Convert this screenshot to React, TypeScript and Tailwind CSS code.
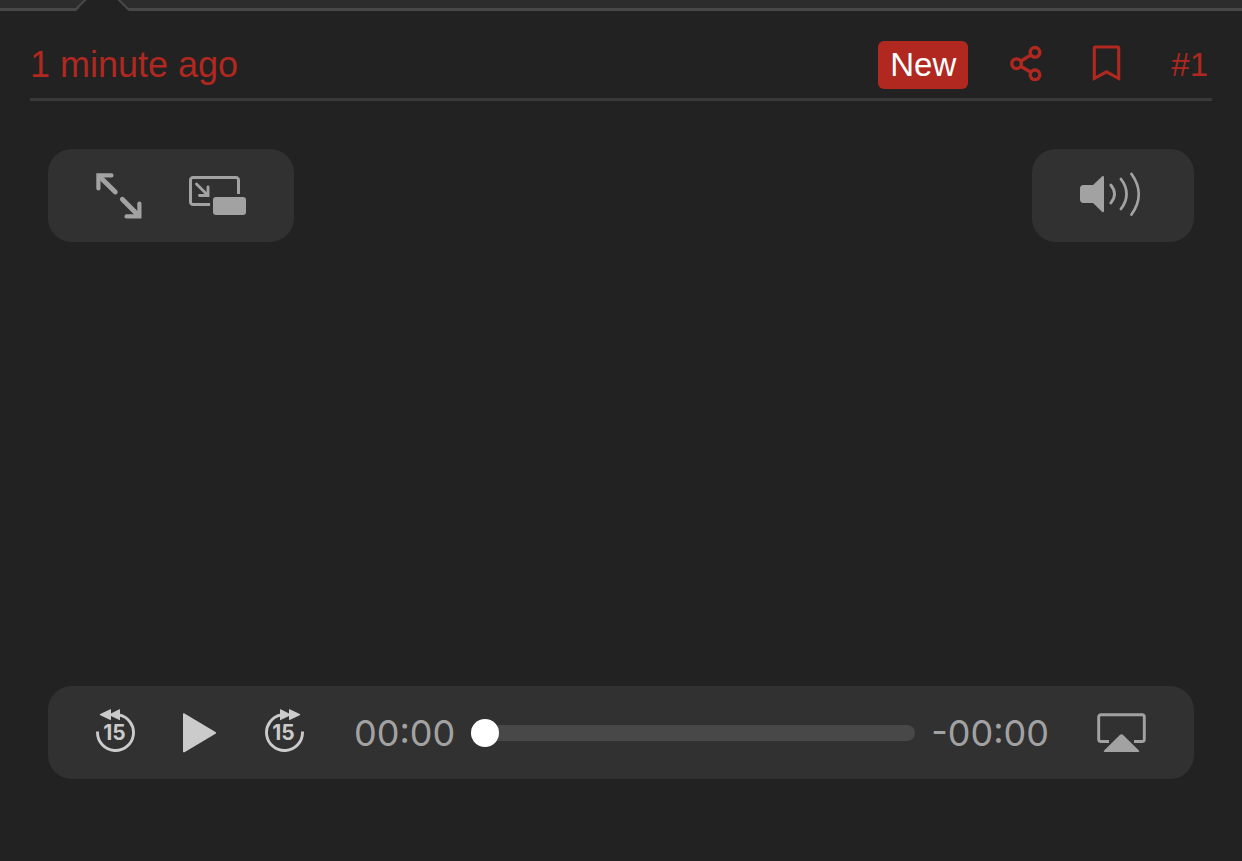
import { useState } from "react";

function ShareIcon() {
  return (
    <svg width="32" height="40" viewBox="0 0 32 40" fill="none" stroke="currentColor" strokeWidth="3.4" aria-hidden="true">
      <circle cx="6.6" cy="18.7" r="4.8" />
      <circle cx="25" cy="7.3" r="4.8" />
      <circle cx="25" cy="29.8" r="4.8" />
      <path d="M10.7 16.200 20.900 9.900M10.700 21.200 20.900 27.200" />
    </svg>
  );
}

function BookmarkIcon() {
  return (
    <svg width="29" height="40" viewBox="0 0 29 40" fill="none" stroke="currentColor" strokeWidth="3.1" aria-hidden="true">
      <path d="M3.200 2h22.600a.9.9 0 0 1 .9.9v30.600L14.500 26.800 2.300 33.500V2.900a.9.9 0 0 1 .9-.9Z" />
    </svg>
  );
}

function FullscreenIcon() {
  return (
    <svg width="46" height="46" viewBox="0 0 46 46" fill="none" stroke="currentColor" strokeLinecap="round" aria-hidden="true">
      <path d="M19.300 19 4 4M26.300 26.300 42 42" strokeWidth="4.800" />
      <path d="M15.500 2.400H2.400V15.500M30.500 43.400H43.400V30.500" strokeWidth="4.200" />
    </svg>
  );
}

function PipIcon() {
  return (
    <svg width="57" height="40" viewBox="0 0 57 40" fill="none" stroke="currentColor" aria-hidden="true">
      <path d="M21 28.500H4A2.500 2.500 0 0 1 1.500 26V4A2.500 2.500 0 0 1 4 1.500h43A2.500 2.500 0 0 1 49.500 4v14" strokeWidth="3" />
      <path d="M7.500 8 18.500 19M19 11v8.500H10.500" strokeWidth="2.900" strokeLinecap="round" />
      <rect x="24" y="21" width="33" height="18" rx="3" fill="currentColor" stroke="none" />
    </svg>
  );
}

function VolumeIcon() {
  return (
    <svg width="66" height="49" viewBox="0 0 66 49" fill="none" stroke="currentColor" strokeLinecap="round" aria-hidden="true">
      <path
        d="M3.500 14H13L22 5.400c.8-.8 2-.4 2 .8v33.800c0 1.200-1.200 1.600-2 .8L13 32H3.500C1.300 32 0 30.700 0 28.500v-11C0 15.300 1.300 14 3.500 14Z"
        fill="currentColor"
        stroke="none"
      />
      <path d="M30.800 14c5 6 5 12 0 18M40.900 8c7.500 9.500 7.500 20.500 0 30M51.500 3c9.500 13 9.500 27.500 0 40.500" strokeWidth="2.800" />
    </svg>
  );
}

function SkipIcon({ forward = false }: { forward?: boolean }) {
  return (
    <svg width="39" height="47" viewBox="0 0 39 47" aria-hidden="true">
      <g transform={forward ? "matrix(-1 0 0 1 39 0)" : undefined}>
        <path d="M1.500 22.500v1A18 18 0 1 0 23 5.900" fill="none" stroke="currentColor" strokeWidth="2.900" />
        <path d="M4.300 5 14.300.3c.5-.2.7 0 .7.500v3.700L23.300.3c.5-.2.7 0 .7.500v9.800c0 .5-.3.700-.7.500L15 6.900v3.700c0 .5-.3.700-.7.500L4.300 6.300C3.700 6 3.700 5.300 4.300 5Z" fill="currentColor" />
      </g>
      <text x="18.500" y="31" textAnchor="middle" fill="currentColor" className="font-['Inter',sans-serif] text-[21px] font-bold">
        15
      </text>
    </svg>
  );
}

function PlayIcon() {
  return (
    <svg width="36" height="40" viewBox="0 0 36 40" fill="currentColor" aria-hidden="true">
      <path d="M1 1.200C1 .4 1.800 0 2.500.4l31 18.500c.8.500.8 1.300 0 1.800l-31 18.500c-.7.400-1.500 0-1.500-.8Z" />
    </svg>
  );
}

function AirPlayIcon() {
  return (
    <svg width="49" height="40" viewBox="0 0 49 40" fill="none" aria-hidden="true">
      <path
        d="M12 28.500H4A2.300 2.300 0 0 1 1.700 26.200V4A2.300 2.300 0 0 1 4 1.700h41A2.300 2.300 0 0 1 47.300 4v22.200a2.300 2.300 0 0 1-2.300 2.300h-8"
        stroke="currentColor"
        strokeWidth="2.900"
      />
      <path d="M23.100 21.800c.8-.8 2-.8 2.800 0l16 15.700c.7.700.4 1.500-.5 1.500H7.600c-.9 0-1.200-.8-.5-1.500Z" fill="currentColor" />
    </svg>
  );
}

function PostHeader() {
  return (
    <header className="flex items-center justify-between border-b-[3px] border-[#393939] pr-1 pb-[9px] text-[#b0281f]">
      <a href="#post" className="text-[36px] leading-[48px]">
        1 minute ago
      </a>
      <div className="flex items-center text-[33px] leading-[48px]">
        <span className="rounded-md bg-[#b0281f] px-3 text-white">New</span>
        <button type="button" aria-label="Share" className="ml-[42px]">
          <ShareIcon />
        </button>
        <button type="button" aria-label="Bookmark" className="ml-[50px]">
          <BookmarkIcon />
        </button>
        <a href="#post-1" className="ml-[50px]">
          #1
        </a>
      </div>
    </header>
  );
}

function VideoPlayer() {
  const [position, setPosition] = useState(0);
  const [playing, setPlaying] = useState(false);

  return (
    <section aria-label="Video player" className="mt-12 flex flex-1 flex-col justify-between px-[18px] pb-[82px] text-[#a2a2a2]">
      <div className="flex justify-between">
        <div className="flex h-[93px] items-center gap-[47px] rounded-3xl bg-[#313131] px-12">
          <button type="button" aria-label="Full screen">
            <FullscreenIcon />
          </button>
          <button type="button" aria-label="Picture in picture">
            <PipIcon />
          </button>
        </div>
        <button type="button" aria-label="Mute" className="flex h-[93px] items-center rounded-3xl bg-[#313131] px-12">
          <VolumeIcon />
        </button>
      </div>

      <div className="flex h-[93px] items-center rounded-3xl bg-[#313131] px-12">
        <div className="flex items-center gap-[47px] text-[#cbcbcb]">
          <button type="button" aria-label="Back 15 seconds" onClick={() => setPosition(Math.max(position - 15, 0))}>
            <SkipIcon />
          </button>
          <button type="button" aria-label={playing ? "Pause" : "Play"} onClick={() => setPlaying(!playing)}>
            <PlayIcon />
          </button>
          <button type="button" aria-label="Forward 15 seconds" onClick={() => setPosition(Math.min(position + 15, 100))}>
            <SkipIcon forward />
          </button>
        </div>
        <span className="ml-[50px] font-['Inter',sans-serif] text-[36px]">00:00</span>
        <input
          type="range"
          aria-label="Playback position"
          min={0}
          max={100}
          value={position}
          onChange={(e) => setPosition(Number(e.target.value))}
          className="mx-4 h-7 min-w-0 flex-1 appearance-none bg-transparent [&::-webkit-slider-runnable-track]:h-4 [&::-webkit-slider-runnable-track]:rounded-full [&::-webkit-slider-runnable-track]:bg-[#484848] [&::-webkit-slider-thumb]:-mt-[6px] [&::-webkit-slider-thumb]:size-7 [&::-webkit-slider-thumb]:appearance-none [&::-webkit-slider-thumb]:rounded-full [&::-webkit-slider-thumb]:bg-white"
        />
        <span className="font-['Inter',sans-serif] text-[36px]">-00:00</span>
        <button type="button" aria-label="AirPlay" className="ml-12">
          <AirPlayIcon />
        </button>
      </div>
    </section>
  );
}

export default function App() {
  return (
    <div className="flex min-h-screen flex-col bg-[#222222] font-['Liberation_Sans',Arial,sans-serif]">
      <div className="relative h-[11px] border-b-[3px] border-[#484848] bg-[#2c2c2c]">
        <svg className="absolute top-0 left-[72px]" width="60" height="11" viewBox="0 0 60 11" aria-hidden="true">
          <path d="M4 11 15 0h31l11 11Z" fill="#222222" />
          <path d="M3 10 14 -1M46 -1 57 10" stroke="#484848" strokeWidth="2" />
        </svg>
      </div>
      <main className="flex flex-1 flex-col px-[30px] pt-[30px]">
        <PostHeader />
        <VideoPlayer />
      </main>
    </div>
  );
}
